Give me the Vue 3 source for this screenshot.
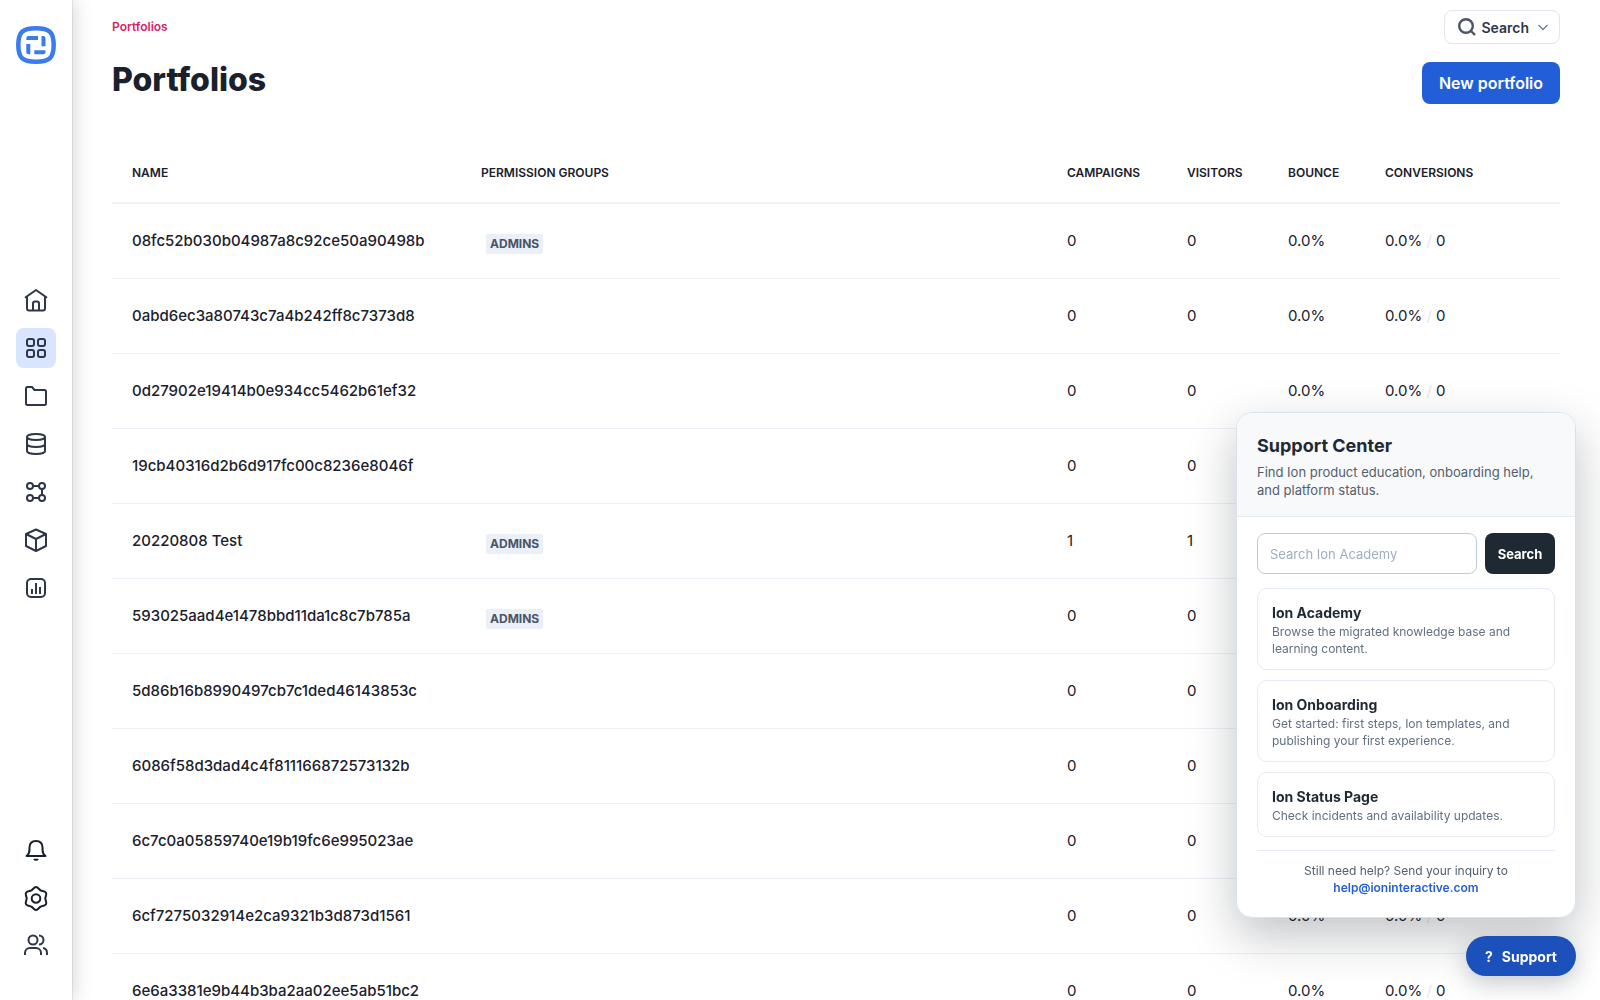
<template>
  <div class="layout">
    <aside class="sidebar">
      <a class="logo" href="#" aria-label="Ion home">
        <svg width="40" height="38" viewBox="0 0 40 38">
          <path
            d="M20 2.300c7 0 11 .6 14 3.600s3.700 6.600 3.700 13.100-.7 10.100-3.700 13.100-7 3.600-14 3.600-11-.6-14-3.600S2.300 25.500 2.300 19s.7-10.100 3.700-13.100 7-3.600 14-3.600z"
            fill="none"
            stroke="#3a7bee"
            stroke-width="4.500"
          />
          <path
            d="M12.500 10H22v4H10.300v-1.800A2.200 2.200 0 0 1 12.500 10zM10.300 18h4v10.300h-1.800a2.200 2.200 0 0 1-2.200-2.200zM25.500 10h1.800a2.200 2.200 0 0 1 2.200 2.200V20.300h-4zM18.300 24.300h11.200v1.800a2.200 2.200 0 0 1-2.200 2.200h-9z"
            fill="#3a7bee"
          />
        </svg>
      </a>

      <nav class="nav-group" aria-label="Main">
        <a
          v-for="item in mainNav"
          :key="item.label"
          class="nav-item"
          :class="{ active: item.active }"
          href="#"
          :aria-label="item.label"
        >
          <svg class="nav-icon" viewBox="0 0 24 24">
            <path v-for="d in item.paths" :key="d" :d="d" />
          </svg>
        </a>
      </nav>

      <nav class="nav-group nav-bottom" aria-label="Account">
        <a
          v-for="item in bottomNav"
          :key="item.label"
          class="nav-item"
          :class="{ dark: item.dark }"
          href="#"
          :aria-label="item.label"
        >
          <svg class="nav-icon" viewBox="0 0 24 24">
            <path v-for="d in item.paths" :key="d" :d="d" />
          </svg>
        </a>
      </nav>
    </aside>

    <main class="content">
      <div class="top-row">
        <a class="breadcrumb" href="#">Portfolios</a>
        <button type="button" class="search-toggle">
          <svg width="20" height="20" viewBox="0 0 20 20" class="search-icon">
            <circle cx="9" cy="9" r="6.800" />
            <path d="M14 14l4 4" />
          </svg>
          Search
          <svg width="12" height="12" viewBox="0 0 12 12" class="chevron">
            <path d="M1.500 4L6 8.500 10.500 4" />
          </svg>
        </button>
      </div>

      <div class="title-row">
        <h1>Portfolios</h1>
        <button type="button" class="btn-primary">New portfolio</button>
      </div>

      <table class="portfolio-table">
        <thead>
          <tr>
            <th class="col-name">Name</th>
            <th>Permission groups</th>
            <th class="col-campaigns">Campaigns</th>
            <th class="col-visitors">Visitors</th>
            <th class="col-bounce">Bounce</th>
            <th class="col-conversions">Conversions</th>
          </tr>
        </thead>
        <tbody>
          <tr v-for="row in portfolios" :key="row.name">
            <td class="name">{{ row.name }}</td>
            <td><span v-if="row.admins" class="badge">Admins</span></td>
            <td>{{ row.count }}</td>
            <td>{{ row.count }}</td>
            <td>0.0%</td>
            <td>0.0% <span class="slash">/</span> 0</td>
          </tr>
        </tbody>
      </table>
    </main>

    <div class="support">
      <section v-if="supportOpen" class="support-panel" aria-labelledby="supportTitle">
        <header class="support-header">
          <h2 id="supportTitle">Support Center</h2>
          <p>Find Ion product education, onboarding help, and platform status.</p>
        </header>
        <div class="support-body">
          <form class="support-form" @submit.prevent>
            <input v-model="query" type="text" placeholder="Search Ion Academy" aria-label="Search Ion Academy" />
            <button type="submit">Search</button>
          </form>
          <div class="support-links">
            <a v-for="link in supportLinks" :key="link.title" class="support-card" href="#">
              <strong>{{ link.title }}</strong>
              <span>{{ link.text }}</span>
            </a>
          </div>
          <p class="support-contact">
            Still need help? Send your inquiry to
            <a href="mailto:help@ioninteractive.com">help@ioninteractive.com</a>
          </p>
        </div>
      </section>
      <button type="button" class="support-toggle" @click="supportOpen = !supportOpen">
        <span>?</span>
        <span>Support</span>
      </button>
    </div>
  </div>
</template>

<script setup>
import { ref } from "vue";

const supportOpen = ref(true);
const query = ref("");

const mainNav = [
  {
    label: "Home",
    paths: [
      "M1 9.800L12 2l11 7.800",
      "M3 8.500V20.500a2 2 0 0 0 2 2h14a2 2 0 0 0 2-2V8.500",
      "M9 22v-6.500a2 2 0 0 1 2-2h2a2 2 0 0 1 2 2V22",
    ],
  },
  {
    label: "Portfolios",
    active: true,
    paths: [
      "M5 3h3a2 2 0 0 1 2 2v3a2 2 0 0 1-2 2H5a2 2 0 0 1-2-2V5a2 2 0 0 1 2-2z",
      "M16 3h3a2 2 0 0 1 2 2v3a2 2 0 0 1-2 2h-3a2 2 0 0 1-2-2V5a2 2 0 0 1 2-2z",
      "M5 14h3a2 2 0 0 1 2 2v3a2 2 0 0 1-2 2H5a2 2 0 0 1-2-2v-3a2 2 0 0 1 2-2z",
      "M16 14h3a2 2 0 0 1 2 2v3a2 2 0 0 1-2 2h-3a2 2 0 0 1-2-2v-3a2 2 0 0 1 2-2z",
    ],
  },
  {
    label: "Folders",
    paths: ["M2 19.500V4.500A1.500 1.500 0 0 1 3.500 3H8l2.500 3H20.500A1.500 1.500 0 0 1 22 7.500v12a1.500 1.500 0 0 1-1.500 1.500h-17A1.500 1.500 0 0 1 2 19.500z"],
  },
  {
    label: "Data",
    paths: [
      "M3 5c0-1.700 4-3 9-3s9 1.300 9 3-4 3-9 3-9-1.300-9-3z",
      "M3 5v14c0 1.700 4 3 9 3s9-1.300 9-3V5",
      "M3 12c0 1.700 4 3 9 3s9-1.300 9-3",
    ],
  },
  {
    label: "Workflows",
    paths: [
      "M3 6a3 3 0 1 0 6 0 3 3 0 1 0-6 0z",
      "M15 6a3 3 0 1 0 6 0 3 3 0 1 0-6 0z",
      "M3 18a3 3 0 1 0 6 0 3 3 0 1 0-6 0z",
      "M15 18a3 3 0 1 0 6 0 3 3 0 1 0-6 0z",
      "M9 6h6M9 18h6M18 9v6",
    ],
  },
  {
    label: "Assets",
    paths: ["M12 1.500L22 6v12l-10 5L2 18V6z", "M2 6l10 5 10-5M12 11v12"],
  },
  {
    label: "Reports",
    paths: [
      "M7 3h10a4 4 0 0 1 4 4v10a4 4 0 0 1-4 4H7a4 4 0 0 1-4-4V7a4 4 0 0 1 4-4z",
      "M8 13v5M12 7v11M16 11v7",
    ],
  },
];

const bottomNav = [
  {
    label: "Notifications",
    dark: true,
    paths: [
      "M2.500 18h19c-2.300-1.500-3-4-3-6.500V9.500C18.500 5.500 16 3 12 3S5.500 5.500 5.500 9.500v2c0 2.500-.7 5-3 6.500z",
      "M10 21c.6 1.100 3.400 1.100 4 0",
    ],
  },
  {
    label: "Settings",
    dark: true,
    paths: [
      "M7.700 12.500a4.300 4.300 0 1 0 8.600 0 4.300 4.300 0 1 0-8.600 0z",
      "M12 1C14 1 15.100 3.500 16.600 4.400C18.200 5.300 21 5 22 6.800C23 8.500 21.300 10.700 21.300 12.500C21.300 14.300 23 16.500 22 18.200C21 20 18.200 19.700 16.600 20.600C15.100 21.500 14 24 12 24C10 24 8.900 21.500 7.400 20.600C5.800 19.700 3 20 2 18.200C1 16.500 2.700 14.300 2.700 12.500C2.700 10.700 1 8.500 2 6.800C3 5 5.800 5.300 7.400 4.400C8.900 3.500 10 1 12 1z",
    ],
  },
  {
    label: "Users",
    paths: [
      "M4.500 6a4.500 4.500 0 1 0 9 0 4.500 4.500 0 1 0-9 0z",
      "M1 21v-2a5 5 0 0 1 5-5h6a5 5 0 0 1 5 5v2",
      "M15 1.500a4.500 4.500 0 0 1 0 9M19 14a5 5 0 0 1 4 5v2",
    ],
  },
];

const portfolios = [
  { name: "08fc52b030b04987a8c92ce50a90498b", admins: true, count: 0 },
  { name: "0abd6ec3a80743c7a4b242ff8c7373d8", count: 0 },
  { name: "0d27902e19414b0e934cc5462b61ef32", count: 0 },
  { name: "19cb40316d2b6d917fc00c8236e8046f", count: 0 },
  { name: "20220808 Test", admins: true, count: 1 },
  { name: "593025aad4e1478bbd11da1c8c7b785a", admins: true, count: 0 },
  { name: "5d86b16b8990497cb7c1ded46143853c", count: 0 },
  { name: "6086f58d3dad4c4f811166872573132b", count: 0 },
  { name: "6c7c0a05859740e19b19fc6e995023ae", count: 0 },
  { name: "6cf7275032914e2ca9321b3d873d1561", count: 0 },
  { name: "6e6a3381e9b44b3ba2aa02ee5ab51bc2", count: 0 },
];

const supportLinks = [
  { title: "Ion Academy", text: "Browse the migrated knowledge base and learning content." },
  { title: "Ion Onboarding", text: "Get started: first steps, Ion templates, and publishing your first experience." },
  { title: "Ion Status Page", text: "Check incidents and availability updates." },
];
</script>

<style>
body {
  margin: 0;
  background: #fff;
}
</style>

<style scoped>
.layout {
  display: flex;
  height: 100vh;
  overflow: hidden;
  font-family: Inter, "Liberation Sans", sans-serif;
  color: #1a202c;
}

.layout * {
  box-sizing: border-box;
}

a {
  text-decoration: none;
}

button,
input {
  font-family: inherit;
}

button {
  cursor: pointer;
}

/* sidebar */
.sidebar {
  display: flex;
  flex-direction: column;
  align-items: center;
  justify-content: space-between;
  flex: none;
  width: 72px;
  padding: 24px 0 34px;
  background: #fff;
  box-shadow: 0 0 1px rgba(0, 0, 0, 0.4), 0 0 20px rgba(0, 0, 0, 0.2);
  z-index: 1;
}

.logo {
  display: flex;
  align-items: center;
  height: 42px;
}

.nav-group {
  display: flex;
  flex-direction: column;
  gap: 8px;
}

.nav-bottom {
  padding-top: 8px;
}

.nav-item {
  display: flex;
  align-items: center;
  justify-content: center;
  width: 40px;
  height: 40px;
  border-radius: 8px;
  color: #2d3748;
}

.nav-item.active {
  background: #d9e5ff;
}

.nav-item.dark {
  color: #1a202c;
}

.nav-icon {
  width: 24px;
  height: 24px;
  overflow: visible;
  fill: none;
  stroke: currentColor;
  stroke-width: 2;
  stroke-linejoin: round;
}

/* page */
.content {
  flex: 1;
  min-width: 0;
  padding: 10px 40px 0;
  overflow: hidden;
}

.top-row,
.title-row {
  display: flex;
  justify-content: space-between;
}

.breadcrumb {
  padding-top: 8px;
  font-size: 12px;
  line-height: 18px;
  font-weight: 600;
  color: #d61f69;
}

.search-toggle {
  display: flex;
  align-items: center;
  gap: 4px;
  height: 34px;
  padding: 0 10px 0 12px;
  border: 1px solid #e2e4f0;
  border-radius: 8px;
  background: #fff;
  font-size: 14px;
  font-weight: 600;
  color: #2d3748;
}

.search-icon {
  fill: none;
  stroke: #4a5568;
  stroke-width: 2.4;
}

.chevron {
  margin-left: 4px;
  fill: none;
  stroke: #718096;
  stroke-width: 1.4;
}

.title-row {
  margin-top: 18px;
}

h1 {
  margin: 0;
  font-size: 32px;
  line-height: 36px;
  font-weight: 800;
}

.btn-primary {
  height: 42px;
  padding: 0 17px;
  border: none;
  border-radius: 8px;
  background: #225ed8;
  color: #fff;
  font-size: 16px;
  font-weight: 600;
}

.portfolio-table {
  width: 100%;
  margin-top: 38px;
  table-layout: fixed;
  border-collapse: separate;
  border-spacing: 0;
}

.portfolio-table th,
.portfolio-table td {
  padding: 0 0 0 20px;
  text-align: left;
}

.portfolio-table th {
  height: 62px;
  border-bottom: 2px solid #edf2f7;
  font-size: 12px;
  font-weight: 600;
  text-transform: uppercase;
}

.portfolio-table td {
  height: 75px;
  padding-bottom: 2px;
  border-bottom: 1px solid #edf0f7;
  font-size: 15px;
}

.col-name {
  width: 349px;
}

.col-campaigns {
  width: 120px;
}

.col-visitors {
  width: 101px;
}

.col-bounce {
  width: 97px;
}

.col-conversions {
  width: 195px;
}

.portfolio-table .name {
  font-weight: 500;
}

.badge {
  display: inline-block;
  margin: 8px 0 0 5px;
  padding: 0 4px;
  border-radius: 2px;
  background: #ebeff7;
  color: #4a5568;
  font-size: 12px;
  line-height: 20px;
  font-weight: 700;
  text-transform: uppercase;
}

.slash {
  color: #e2e8f0;
}

/* support widget */
.support {
  position: fixed;
  right: 24px;
  bottom: 24px;
  display: flex;
  flex-direction: column;
  align-items: flex-end;
  gap: 18px;
  z-index: 2;
}

.support-panel {
  width: 340px;
  border: 1px solid #d9e2ec;
  border-radius: 16px;
  background: #fff;
  box-shadow: 0 18px 48px rgba(31, 41, 51, 0.28);
  overflow: hidden;
}

.support-header {
  padding: 21px 20px 17px;
  border-bottom: 1px solid #e4ebf3;
  background: #f8f9fb;
}

.support-header h2 {
  margin: 0 0 5px;
  font-size: 18px;
  line-height: 24px;
  font-weight: 700;
  color: #1f2933;
}

.support-header p {
  margin: 0;
  font-size: 13px;
  line-height: 18px;
  color: #52606d;
}

.support-body {
  padding: 16px 20px 21px;
}

.support-form {
  display: flex;
  gap: 8px;
}

.support-form input {
  flex: 1;
  min-width: 0;
  height: 41px;
  padding: 0 12px;
  border: 1px solid #bcccdc;
  border-radius: 8px;
  font-size: 13px;
  color: #1f2933;
}

.support-form input::placeholder {
  color: #a0aec0;
}

.support-form button {
  width: 70px;
  padding: 0;
  border: none;
  border-radius: 8px;
  background: #1f2933;
  color: #fff;
  font-size: 13px;
  font-weight: 700;
}

.support-links {
  display: flex;
  flex-direction: column;
  gap: 10px;
  margin-top: 14px;
}

.support-card {
  display: flex;
  flex-direction: column;
  gap: 1px;
  padding: 15px 14px 12px;
  border: 1px solid #e4ebf3;
  border-radius: 10px;
}

.support-card strong {
  font-size: 14px;
  line-height: 18px;
  font-weight: 700;
  color: #1f2933;
}

.support-card span {
  font-size: 12px;
  line-height: 17px;
  color: #627083;
}

.support-contact {
  margin: 13px 0 0;
  padding-top: 11px;
  border-top: 1px solid #e4ebf3;
  font-size: 12px;
  line-height: 17px;
  text-align: center;
  color: #52606d;
}

.support-contact a {
  display: block;
  font-weight: 600;
  color: #225ed8;
}

.support-toggle {
  display: flex;
  align-items: center;
  gap: 9px;
  height: 40px;
  padding: 0 19px;
  border: none;
  border-radius: 20px;
  background: #1c50ba;
  box-shadow: 0 8px 24px rgba(31, 41, 51, 0.24);
  color: #fff;
  font-size: 14px;
  font-weight: 700;
}
</style>
